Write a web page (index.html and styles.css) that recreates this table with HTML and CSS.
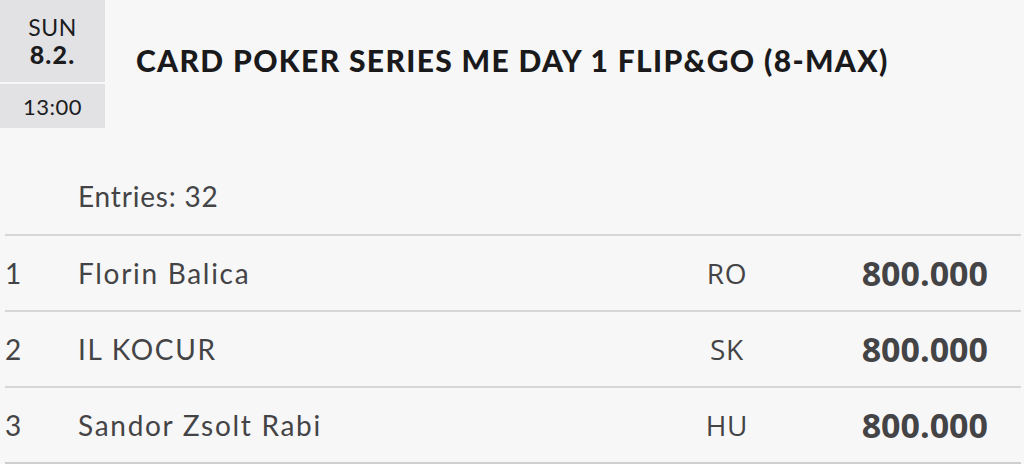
FILE: index.html
```html
<!DOCTYPE html>
<html>
<head>
<meta charset="utf-8">
<link rel="stylesheet" href="styles.css">
</head>
<body>
<div class="page">
  <header class="event">
    <div class="datebox">
      <div class="date">
        <span class="day">SUN</span>
        <span class="dm">8.2.</span>
      </div>
      <div class="time">13:00</div>
    </div>
    <h1 class="title">CARD POKER SERIES ME DAY 1 FLIP&amp;GO (8-MAX)</h1>
  </header>
  <div class="entries">Entries: 32</div>
  <div class="results">
    <div class="row"><span class="pos">1</span><span class="name">Florin Balica</span><span class="country">RO</span><span class="prize">800.000</span></div>
    <div class="row"><span class="pos">2</span><span class="name">IL KOCUR</span><span class="country">SK</span><span class="prize">800.000</span></div>
    <div class="row"><span class="pos">3</span><span class="name">Sandor Zsolt Rabi</span><span class="country">HU</span><span class="prize">800.000</span></div>
  </div>
</div>
</body>
</html>
```

FILE: styles.css
```css
html, body {
  margin: 0;
  padding: 0;
  background: #f7f7f7;
}
body {
  font-family: "Lato", "Liberation Sans", sans-serif;
  color: #444446;
}
.page {
  width: 1024px;
  height: 464px;
  overflow: hidden;
}
.event {
  display: flex;
  align-items: flex-start;
}
.datebox {
  width: 105px;
  display: flex;
  flex-direction: column;
  gap: 2px;
}
.date {
  background: #e2e2e4;
  height: 82px;
  display: flex;
  flex-direction: column;
  align-items: center;
  justify-content: center;
  color: #1c1c1e;
}
.day {
  font-size: 23px;
  line-height: 27px;
  letter-spacing: 0.5px;
}
.dm {
  font-size: 25px;
  font-weight: 900;
  line-height: 27px;
  letter-spacing: 1.2px;
}
.time {
  background: #e2e2e4;
  height: 44px;
  display: flex;
  align-items: center;
  justify-content: center;
  font-size: 22px;
  letter-spacing: 0.5px;
  color: #1c1c1e;
}
.title {
  margin: 42px 0 0 31px;
  font-size: 30px;
  line-height: 36px;
  font-weight: 900;
  color: #1a1a1c;
  letter-spacing: 1.35px;
}
.entries {
  margin: 51px 0 0 78px;
  font-size: 28px;
  line-height: 34px;
  height: 55px;
  letter-spacing: 0.8px;
}
.results {
  margin-left: 5px;
  width: 1016px;
  border-top: 2px solid #d6d6d8;
}
.row {
  display: flex;
  align-items: center;
  height: 74px;
  border-bottom: 2px solid #d6d6d8;
  font-size: 28px;
  letter-spacing: 1.7px;
}
.row:last-child {
  border-bottom-color: #cfcfd1;
}
.pos {
  width: 73px;
}
.name {
  flex: 1;
}
.country {
  width: 80px;
  text-align: center;
  font-family: "Open Sans", "Liberation Sans", sans-serif;
  font-size: 28px;
  letter-spacing: 0.8px;
  margin-right: 61px;
}
.prize {
  font-family: "Open Sans", "Liberation Sans", sans-serif;
  font-weight: 700;
  font-size: 34px;
  letter-spacing: 0;
  width: 160px;
  text-align: right;
  margin-right: 33px;
}
```
